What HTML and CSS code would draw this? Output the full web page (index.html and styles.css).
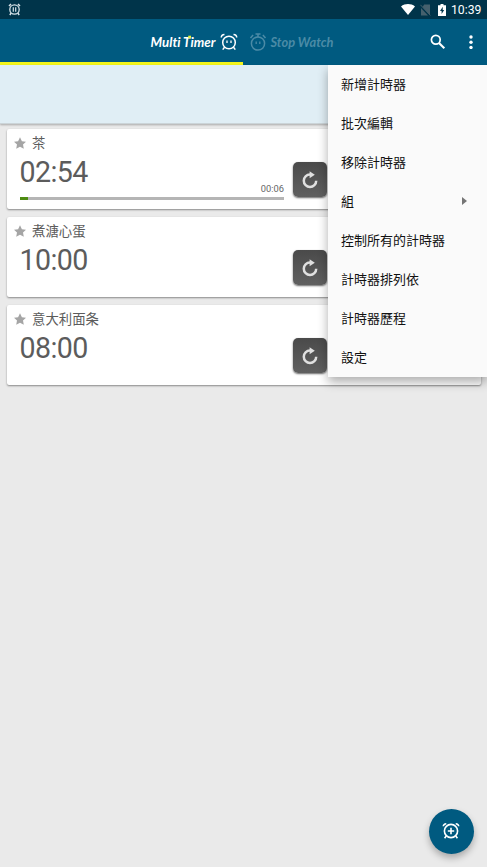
FILE: index.html
```html
<!DOCTYPE html>
<html lang="zh-Hant">
<head>
<meta charset="utf-8">
<title>Multi Timer</title>
<link rel="stylesheet" href="styles.css">
</head>
<body>
<svg class="defs" width="0" height="0">
  <symbol id="star" viewBox="0 0 24 24"><path d="M12 .5l3.800 7.900 8.200 1-6 5.800 1.600 8.300L12 19.400l-7.600 4.100L6 15.200 0 9.400l8.200-1z"/></symbol>
  <symbol id="restart" viewBox="0 0 18 18"><path d="M10 3.500H9A6.200 6.200 0 1 0 15.200 9.700" fill="none" stroke="currentColor" stroke-width="2.500"/><path d="M8.600.2l5.200 3.600-5.200 3.400z" fill="currentColor"/></symbol>
</svg>
<div class="status">
  <svg class="alarm" width="13" height="13" viewBox="0 0 13 13"><g fill="none" stroke="currentColor"><circle cx="6.500" cy="6.500" r="4.700" stroke-width="1.300"/><path d="M5.300 4.200v4.600M7.700 4.200v4.600" stroke-width="1.200"/><path d="M1 3L3 1M10 1l2 2M3.200 10l-1.400 2M9.800 10l1.400 2" stroke-width="1.500"/></g></svg>
  <svg class="wifi" width="14" height="11" viewBox="0 0 14 11"><path d="M7 11L0 2.400C4-.7 10-.7 14 2.400z" fill="#fff"/></svg>
  <svg class="sim" width="11" height="12" viewBox="0 0 11 12"><path d="M4.200.5H10v10.700L2.500 3zM1 4l7 7.500H1z" fill="#45606d"/><path d="M.4.800l10 10.600" stroke="#45606d"/></svg>
  <svg class="battery" width="8" height="12" viewBox="0 0 8 12"><path d="M2.500 0h3v1.200H8V12H0V1.200h2.500z" fill="#fff"/><path d="M4.800 2.800L2 7h1.600v3L6.200 6H4.700z" fill="#00344a"/></svg>
  <span class="clock">10:39</span>
</div>
<header class="bar">
  <svg class="logo" width="90" height="24" viewBox="0 0 90 24">
    <text class="logo-text" x="0.500" y="17.300" textLength="65" lengthAdjust="spacingAndGlyphs">Multi Timer</text>
    <rect x="38.200" y="5.700" width="2.800" height="2.500" fill="#e2f13c"/>
    <g fill="none" stroke="currentColor" stroke-width="1.500"><circle cx="79" cy="12.500" r="6.300"/><path d="M77 10.400v2.500M81 10.400v2.500" stroke-width="1.300"/><path d="M71.300 7.500Q71.200 4.700 74.500 4.600M83.500 4.600Q86.800 4.700 86.700 7.500M74.500 17.300l-1.800 2.300M83.500 17.300l1.800 2.300"/></g>
  </svg>
  <svg class="logo dim" width="92" height="24" viewBox="0 0 92 24">
    <g fill="none" stroke="currentColor" stroke-width="1.500"><circle cx="9" cy="13.500" r="6.600"/><path d="M7.200 11.500V14M10.800 11.500V14" stroke-width="1.300"/><path d="M6.500 4h5M9 4v3M1.500 8l2.600-3M16.500 8l-2.600-3"/></g>
    <text class="logo-text" x="21.500" y="17.300" textLength="63" lengthAdjust="spacingAndGlyphs">Stop Watch</text>
  </svg>
  <svg class="search" width="16" height="16" viewBox="0 0 16 16"><g fill="none" stroke="#fff"><circle cx="5.800" cy="5.800" r="4.400" stroke-width="1.700"/><path d="M9 9l5.300 5.300" stroke-width="2.100"/></g></svg>
  <svg class="more" width="4" height="14" viewBox="0 0 4 14" fill="#fff"><circle cx="2" cy="2" r="1.700"/><circle cx="2" cy="7.200" r="1.700"/><circle cx="2" cy="12.400" r="1.700"/></svg>
</header>
<div class="tabs"><div class="indicator"></div></div>
<div class="banner"></div>
<main class="list">
  <section class="card">
    <div class="info">
      <div class="title"><svg class="star"><use href="#star"/></svg>茶</div>
      <div class="time">02:54</div>
      <div class="elapsed">00:06</div>
      <div class="track"><div class="fill" style="width:3%"></div></div>
    </div>
    <div class="reset"><svg width="18" height="18"><use href="#restart"/></svg></div>
  </section>
  <section class="card">
    <div class="info">
      <div class="title"><svg class="star"><use href="#star"/></svg>煮溏心蛋</div>
      <div class="time">10:00</div>
    </div>
    <div class="reset"><svg width="18" height="18"><use href="#restart"/></svg></div>
  </section>
  <section class="card">
    <div class="info">
      <div class="title"><svg class="star"><use href="#star"/></svg>意大利面条</div>
      <div class="time">08:00</div>
    </div>
    <div class="reset"><svg width="18" height="18"><use href="#restart"/></svg></div>
  </section>
</main>
<nav class="menu">
  <div class="item">新增計時器</div>
  <div class="item">批次編輯</div>
  <div class="item">移除計時器</div>
  <div class="item">組<span class="arrow"></span></div>
  <div class="item">控制所有的計時器</div>
  <div class="item">計時器排列依</div>
  <div class="item">計時器歷程</div>
  <div class="item">設定</div>
</nav>
<div class="fab"><svg width="18" height="18" viewBox="0 0 18 18"><g fill="none" stroke="#fff" stroke-width="1.600"><circle cx="9" cy="9" r="6.600"/><path d="M9 5.800v6.400M5.800 9h6.400"/><path d="M1.300 4.300Q1.500 1.800 4.300 1.700M13.700 1.700Q16.500 1.800 16.700 4.300M4.200 14l-1.600 2.200M13.800 14l1.600 2.200"/></g></svg></div>
</body>
</html>
```
FILE: styles.css
```css
* { box-sizing: border-box; }
body {
  margin: 0;
  width: 487px;
  height: 867px;
  position: relative;
  overflow: hidden;
  background: #eaeaea;
  font-family: Roboto, "Noto Sans CJK TC", sans-serif;
}
svg { display: block; flex: none; }
.defs { position: absolute; }
.status {
  display: flex;
  align-items: center;
  height: 19px;
  padding: 0 6px 0 8px;
  background: #00344a;
  color: #fff;
}
.alarm { color: #d5e2e8; }
.wifi { margin-left: auto; }
.sim { margin-left: 5px; }
.battery { margin-left: 7px; }
.clock { margin-left: 5px; width: 30px; font-size: 12.2px; line-height: 19px; padding-top: 1px; white-space: nowrap; }
.bar {
  display: flex;
  align-items: center;
  height: 43px;
  padding: 3px 14px 0 150px;
  background: #005a80;
  color: #fff;
}
.logo { overflow: visible; }
.logo-text {
  font-family: Lato, sans-serif;
  font-size: 13.5px;
  font-weight: 700;
  font-style: italic;
  font-variant-ligatures: none;
  fill: currentColor;
}
.dim { margin-left: 9px; color: #4b8ba6; }
.search { margin-left: auto; }
.more { margin-left: 23px; }
.tabs { height: 3px; background: #005a80; }
.indicator { width: 243px; height: 3px; background: #f3f51b; }
.banner {
  height: 59px;
  background: #e0eef5;
  border-bottom: 1px solid #cbd4d8;
  box-shadow: 0 1px 2px rgba(0, 0, 0, .28);
}
.list { display: flex; flex-direction: column; gap: 8px; padding: 5px 6.5px 0; }
.card {
  display: flex;
  gap: 9px;
  height: 79.5px;
  margin-bottom: .5px;
  padding: 0 13px 0 13.5px;
  background: #fff;
  border-radius: 2px;
  box-shadow: 0 1px 2px rgba(0, 0, 0, .42);
}
.info { width: 264px; display: flex; flex-direction: column; }
.title {
  display: flex;
  align-items: center;
  gap: 6.5px;
  height: 26px;
  margin: 0 0 1px -6.5px;
  color: #5c5c5c;
  font-family: "Noto Sans CJK TC", sans-serif;
  font-size: 13.4px;
}
.star { width: 12px; height: 12px; margin-top: 2px; fill: #a5a5a5; }
.time { height: 28px; margin-left: -.5px; color: #5c5c5c; font-size: 28.6px; line-height: 32px; letter-spacing: -.6px; }
.elapsed { height: 13px; line-height: 9px; text-align: right; color: #666; font-size: 9.3px; }
.track { height: 3px; background: #b5b5b5; }
.fill { height: 3px; background: #4d8b12; }
.reset {
  display: flex;
  align-items: center;
  justify-content: center;
  width: 34px;
  height: 35px;
  margin-top: 33px;
  border-radius: 5px;
  background: linear-gradient(#4a4a4a, #606060);
  box-shadow: 0 1px 2px rgba(0, 0, 0, .6);
  color: #e0e0e0;
}
.menu {
  position: absolute;
  left: 328px;
  top: 65px;
  width: 159px;
  height: 312px;
  background: #fafafa;
  box-shadow: 0 5px 10px rgba(0, 0, 0, .32);
  clip-path: inset(0 0 -25px -20px);
}
.item {
  display: flex;
  align-items: center;
  justify-content: space-between;
  height: 39px;
  padding: 0 20px 2px 13px;
  color: #111;
  font-family: "Noto Sans CJK TC", sans-serif;
  font-size: 13px;
}
.arrow { margin-top: 1px; border-left: 5px solid #757575; border-top: 4px solid transparent; border-bottom: 4px solid transparent; }
.fab {
  position: absolute;
  left: 428.5px;
  top: 808.5px;
  width: 45px;
  height: 45px;
  display: flex;
  align-items: center;
  justify-content: center;
  border-radius: 50%;
  background: #005a80;
  box-shadow: 0 4px 7px rgba(0, 0, 0, .28);
}
```
